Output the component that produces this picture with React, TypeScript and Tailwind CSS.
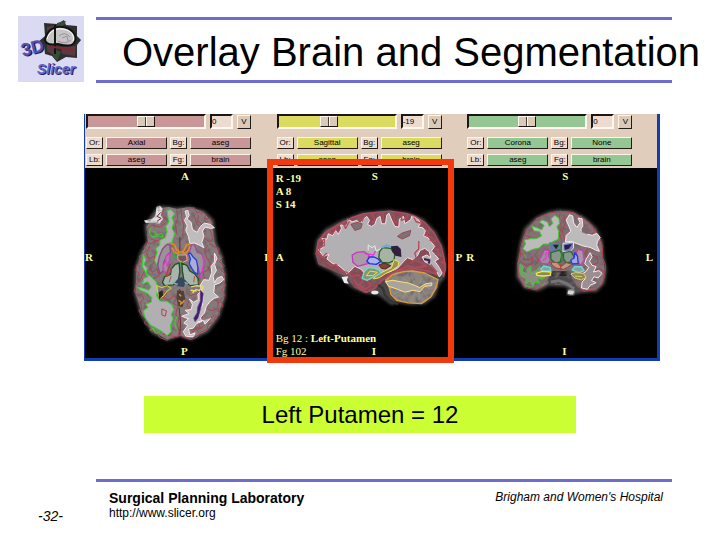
import React from 'react';

type Tone = 'red' | 'yellow' | 'green';

interface Plane {
  id: Tone;
  orientation: string;
  background: string;
  label: string;
  foreground: string;
  offset: string;
  slider: number;
}

const planes: Plane[] = [
  { id: 'red', orientation: 'Axial', background: 'aseg', label: 'aseg', foreground: 'brain', offset: '0', slider: 50 },
  { id: 'yellow', orientation: 'Sagittal', background: 'aseg', label: 'aseg', foreground: 'brain', offset: '-19', slider: 42 },
  { id: 'green', orientation: 'Corona', background: 'None', label: 'aseg', foreground: 'brain', offset: '0', slider: 50 },
];

const tones: Record<Tone, string> = {
  red: 'bg-[#c99797]',
  yellow: 'bg-[#dbdb62]',
  green: 'bg-[#95c795]',
};

const bevel = 'border border-t-[#fff4ea] border-l-[#fff4ea] border-r-[#221c18] border-b-[#221c18]';

const Tag = ({ children }: { children: React.ReactNode }) => (
  <button className={`h-3 w-[17px] shrink-0 bg-[#eedbd0] text-[8px] leading-[10px] text-center ${bevel}`}>{children}</button>
);

const Choice = ({ tone, children }: { tone: Tone; children: React.ReactNode }) => (
  <button className={`h-3 flex-1 text-[8px] leading-[10px] text-center ${tones[tone]} ${bevel}`}>{children}</button>
);

const Controls = ({ plane }: { plane: Plane }) => (
  <div className="w-[166px] space-y-1 pl-px">
    <div className="flex items-center gap-1 pb-1">
      <input
        type="range"
        aria-label={`${plane.orientation} slice`}
        defaultValue={plane.slider}
        className={`h-[15px] min-w-0 flex-1 appearance-none border-2 border-t-[#1d1613] border-l-[#1d1613] border-r-[#fff8f0] border-b-[#fff8f0] ${tones[plane.id]} [&::-webkit-slider-thumb]:h-[11px] [&::-webkit-slider-thumb]:w-[18px] [&::-webkit-slider-thumb]:appearance-none [&::-webkit-slider-thumb]:border [&::-webkit-slider-thumb]:border-t-[#fff8f0] [&::-webkit-slider-thumb]:border-l-[#fff8f0] [&::-webkit-slider-thumb]:border-r-[#1d1613] [&::-webkit-slider-thumb]:border-b-[#1d1613] [&::-webkit-slider-thumb]:bg-[linear-gradient(90deg,#dccab8_7px,#4a4038_7px,#4a4038_8px,#fff8f0_8px,#fff8f0_9px,#dccab8_9px)]`}
      />
      <input
        type="text"
        aria-label={`${plane.orientation} offset`}
        defaultValue={plane.offset}
        className="h-[15px] w-[23px] border-2 border-t-[#1d1613] border-l-[#1d1613] border-r-[#fff8f0] border-b-[#fff8f0] bg-[#eedbd0] text-[8px] leading-[10px]"
      />
      <button className={`h-[14px] w-[14px] bg-[#dccab8] text-[8px] leading-3 text-center ${bevel}`}>V</button>
    </div>
    <div className="flex gap-[3px]">
      <Tag>Or:</Tag>
      <Choice tone={plane.id}>{plane.orientation}</Choice>
      <Tag>Bg:</Tag>
      <Choice tone={plane.id}>{plane.background}</Choice>
    </div>
    <div className="flex gap-[3px] pt-px">
      <Tag>Lb:</Tag>
      <Choice tone={plane.id}>{plane.label}</Choice>
      <Tag>Fg:</Tag>
      <Choice tone={plane.id}>{plane.foreground}</Choice>
    </div>
  </div>
);

// shared scan grain and soft edge, used by all three slices
const ScanFilters = ({ id }: { id: string }) => (
  <defs>
    <filter id={`soft-${id}`} x="-10%" y="-10%" width="120%" height="120%">
      <feGaussianBlur stdDeviation="4" />
    </filter>
    <filter id={`grain-${id}`} x="0" y="0" width="100%" height="100%">
      <feTurbulence type="fractalNoise" baseFrequency="0.06" numOctaves="2" seed="8" result="n" />
      <feColorMatrix in="n" type="matrix" values="0 0 0 0 0.16  0 0 0 0 0.13  0 0 0 0 0.14  2.8 0 0 0 -1.3" result="d" />
      <feComposite in="d" in2="SourceGraphic" operator="in" result="m" />
      <feMerge>
        <feMergeNode in="SourceGraphic" />
        <feMergeNode in="m" />
      </feMerge>
    </filter>
  </defs>
);

const AxialSlice = () => (
  <svg viewBox="15 9 573 570" className="h-full w-full" fill="none" strokeLinejoin="round">
    <ScanFilters id="ax" />
    <path d="M235 122 262 124 290 128 330 124 375 138 402 165 410 230 428 270 440 330 438 400 418 460 385 502 335 526 300 516 262 528 215 505 182 452 162 385 164 310 182 258 200 230 194 180Z" fill="#555" filter="url(#soft-ax)" />
    <path d="M240 130 266 126 292 132 330 126 370 140 396 170 404 232 424 280 436 340 432 402 412 458 380 498 330 522 302 512 262 524 220 500 188 450 167 385 170 310 188 260 204 232 200 185Z" fill="#877a7c" filter="url(#grain-ax)" />
    {/* cortical folds */}
    <g stroke="#a94453" strokeWidth="3">
      <path d="M252 128 248 150 256 158 244 168 254 176 238 186 216 180 204 190 202 212 212 222 232 228 248 220 256 212M232 226 214 236 200 232 192 246 200 256 190 264 178 274 184 290 172 298 168 316 178 326 170 340 182 346 168 358 164 380 174 394 184 388 192 400 182 412 186 432 176 436 186 452 198 460 194 476 208 484 214 500 230 502 240 518 262 526 280 514 294 516 298 498 292 480 298 462 288 448 292 430" />
      <path d="M290 132 294 158 286 180 292 208M304 128 306 160 312 182 308 214M316 128 344 128 352 144 362 138 378 148 374 162 390 160 398 176 384 186 394 202 400 222 388 230 372 218 366 206 378 196 362 190 366 176 354 168 356 150M388 236 404 244 418 250 416 266 428 276 420 290 434 302 424 316 436 326 430 344 438 362 426 374 436 392 422 404 430 424 416 432 420 450 406 456 402 474 386 476 382 496 364 500 352 516 332 524 312 518 302 510" />
      <path d="M210 242 200 266 208 282 224 272 222 294 208 304 218 322 232 312 238 332 218 342 204 334 194 318 184 336 196 352M384 240 374 258 382 280 392 296 384 316 370 322 374 342 386 350 398 336 408 322M176 362 186 376M200 404 212 414 198 420 206 436 218 434M244 376 260 386 250 400 268 404 282 392 290 402 280 414 294 424M320 384 334 392 350 386 360 404 346 416 330 404 322 420 336 432M384 408 400 402 416 410 414 430 396 438 380 430 382 412M372 446 366 462 352 468 360 484 342 494 328 488" />
      <path d="M228 478 240 492 256 496 250 508 268 512 278 500M336 502 348 494 362 490 376 480 392 462 404 450M344 150 348 170 360 186M196 284 184 276M414 290 404 284 396 272" />
    </g>
    {/* white matter, right hemisphere */}
    <g fill="#b1afb1" stroke="#35d82a" strokeWidth="3">
      <path d="M262 136 274 134 284 146 276 158 282 172 276 188 284 206 276 232 262 236 252 244 244 262 236 282 230 298 224 286 232 262 228 250 240 240 240 226 256 218 262 200 258 184 268 170 264 154Z" />
      <path d="M212 188 208 204 218 216 236 212 250 216 246 206 230 208 220 198" fill="none" />
      <path d="M190 268 198 284 192 298 202 310 198 326 214 336 228 350 234 368 230 392 240 408 262 410 276 420 282 434 274 448 280 462 272 480 274 500 262 512 244 498 230 490 212 480 196 458 190 438 204 428 198 418 214 412 216 398 202 384 182 376 172 366 190 370 206 376 214 366 204 350 188 356 192 340 204 336 196 320 188 306Z" />
      <path d="M210 496 220 490 228 506 240 500M292 454 284 474 290 492" fill="none" />
    </g>
    <path d="m246 432 14 6-4 16-10-4Z" stroke="#a94453" strokeWidth="3" />
    {/* white matter, left hemisphere */}
    <g fill="#bebcbd" stroke="#ffe4ec" strokeWidth="3">
      <path d="M316 138 324 136 328 150 322 162 334 172 338 194 352 202 362 184 374 174 392 178 404 188 392 190 376 186 368 198 372 214 366 232 372 248 358 240 344 234 330 236 326 214 318 196 322 182 314 166 320 154Z" />
      <path d="M404 264 412 280 404 298 410 316 400 334 404 354 412 340 426 334 432 344 420 354 404 360 402 384 416 396 404 400 392 408 380 424 374 444 362 458 366 470 350 476 340 490 326 492 330 510 346 504 340 516 318 514 310 500 324 482 312 474 326 462 306 454 328 446 316 436 334 434 338 418 328 402 342 412 356 404 354 388 364 378 362 360 372 344 388 346 396 322 394 304 404 290Z" />
      <path d="M360 372 370 396 368 420 354 444M352 472 370 466 376 478 392 460" />
    </g>
    <g fill="#9a9199" strokeWidth="4">
      <path d="M262 238 270 240 272 262 262 270 252 292 250 318 240 326 234 302 238 276 248 252Z" stroke="#8d498f" />
      <path d="M336 238 344 240 352 262 366 266 374 290 370 318 360 328 352 300 340 278 328 264Z" stroke="#a44c9d" />
      <path d="M270 266 258 274 258 290 250 300 252 318 262 324 266 308 260 298 268 288Z" stroke="#f22ce4" />
      <path d="M326 266 332 264 340 276 350 286 354 306 354 328 344 322 336 310 328 296 332 282Z" fill="#aab0d4" stroke="#2d3be6" />
      <path d="M370 270 372 296 366 324 362 338" stroke="#f22ce4" fill="none" />
    </g>
    <path d="M272 234 284 240 290 254 300 258 294 266 284 262 276 248M332 236 320 240 314 254 306 262 316 266 326 256 330 244" stroke="#e78a25" strokeWidth="5" />
    <path d="M282 262 286 278 298 272 300 290 312 280M302 268 304 300" stroke="#2cb336" strokeWidth="4" />
    <path d="M294 270 320 270 322 286 308 292 294 284Z" stroke="#f3a090" strokeWidth="3" fill="#71585c" />
    <g stroke="#1d5422" strokeWidth="4" fill="#a7b5ae">
      <path d="M298 294 286 298 274 312 272 328 254 336 248 352 254 362 280 360 296 344 300 320Z" />
      <path d="M306 294 322 302 330 318 344 326 356 342 356 360 330 362 312 344 308 320Z" />
    </g>
    <path d="M272 296 264 316 258 334 268 328 276 310" stroke="#a44839" strokeWidth="4" />
    <path d="M296 340 306 336 318 350 312 366 294 364 284 354Z" fill="#36485f" />
    <path d="M278 352 294 358M314 352 324 356" stroke="#81aecd" strokeWidth="4" />
    <path d="M230 362 246 368 262 362 274 370 262 378 252 392 240 400 234 384Z" stroke="#d9d945" strokeWidth="3" />
    <path d="M334 366 352 362 370 366 366 378 348 374 338 384M332 376 350 378" stroke="#e6dc72" strokeWidth="4" />
    <path d="M236 382 248 376 250 390 238 404Z" fill="#26262c" />
    <path d="M362 376 370 386 368 408 362 432 354 460 346 470 342 460 352 444 354 426 362 408Z" fill="#3c2266" stroke="#583184" strokeWidth="2" />
    <path d="M292 376 312 378 316 400 308 428 294 422 290 398Z" fill="#4f423a" />
    <path d="M298 388 304 394M296 406 304 412 302 420M314 406 306 416" stroke="#e4982c" strokeWidth="4" />
    <path d="M274 334 268 352M344 334 342 352M352 340 356 354" stroke="#b45631" strokeWidth="3" />
    <path d="M230 126 240 122 248 130 242 150 250 162 238 176 218 172 198 174 192 166 216 162 226 154Z" fill="#dedede" filter="url(#grain-ax)" />
    <path d="M242 142 232 154 244 160 232 168M300 216 300 258M300 372 300 384M298 430 302 470 300 512" stroke="#6c2935" strokeWidth="3" />
  </svg>
);

const SagittalSlice = () => (
  <svg viewBox="33 39 573 570" className="h-full w-full" fill="none" strokeLinejoin="round">
    <ScanFilters id="sa" />
    <path d="M148 295 154 255 180 222 230 195 290 172 370 164 430 172 475 190 515 230 538 280 546 330 540 370 525 386 512 425 480 448 440 450 400 444 380 450 340 420 300 416 262 400 230 372 200 350 158 330Z" fill="#494949" filter="url(#soft-sa)" />
    <path d="M152 296 158 256 184 226 234 198 292 176 368 167 428 176 470 194 510 234 532 280 544 330 538 364 500 356 440 346 390 354 350 380 326 406 300 414 268 398 246 366 200 346 160 328Z" fill="#884c57" filter="url(#grain-sa)" />
    <path d="M360 372 390 352 440 346 480 354 520 374 518 398 500 426 476 444 436 444 394 436 376 412Z" fill="#8c8681" filter="url(#grain-sa)" />
    {/* white matter */}
    <path d="M160 284 174 278 178 262 170 250 186 252 190 236 204 242 212 226 220 238 230 220 226 208 242 214 250 204 248 192 262 200 276 196 286 206 296 192 306 184 314 196 308 208 320 214 330 208 336 190 346 184 350 206 362 206 366 180 372 174 382 198 390 214 402 216 404 192 416 184 420 206 438 194 442 180 458 190 468 204 460 216 474 218 482 228 476 242 490 248 500 262 510 274 500 288 512 300 522 312 510 318 524 338 532 354 524 366 512 344 496 328 480 320 472 306 486 300 498 308 494 290 480 280 466 286 458 302 444 314 428 308 416 320 398 340 376 350 340 362 300 356 288 342 270 334 256 348 246 356 238 346 222 332 204 326 186 312 192 298 176 304Z" fill="#b2b0b2" stroke="#ffd9e1" strokeWidth="3" />
    <path d="M258 208 276 202 292 206 288 220 270 226ZM398 244 412 234 438 226 434 242 412 252Z" fill="#7d7377" stroke="#9b4652" strokeWidth="3" />
    <g stroke="#b54a5b" strokeWidth="4">
      <path d="M154 298 160 262 176 238 200 222 232 204 260 188 298 176 334 172 376 168 420 174 452 184 482 204 508 234 528 270 538 308 542 344 536 366" />
      <path d="M166 260 178 252 178 272 166 276 160 294 172 308 186 294M196 228 202 238 214 220M236 208 242 220 254 198M284 188 292 198 300 180M322 178 330 194 322 204M354 174 356 198M386 176 388 198 398 204M410 178 410 196 424 190 430 178M448 188 454 200 474 206M480 220 492 232 484 242 504 248M494 254 506 262 516 254M508 284 522 282 518 298 534 304M528 320 538 326" />
      <path d="M184 320 200 332 214 328 226 346 246 352 260 364 282 360 296 376 282 390 302 402 318 392 304 374 324 372M450 316 468 322 484 334 462 336 444 340 430 332 412 342 396 348 370 362M462 258 462 282 450 294 454 308 438 326M268 374 280 396 304 412 328 402 354 374 392 350 440 340 492 348 520 362M498 328 516 350 508 358" />
    </g>
    {/* deep structures */}
    <path d="M262 300 276 292 298 290 312 300 310 314 322 322 300 328 278 334 264 322Z" fill="#aa9aa7" stroke="#c33bb8" strokeWidth="4" />
    <path d="M300 296 326 300 332 288M312 320 302 328" stroke="#ef31de" strokeWidth="4" />
    <path d="M310 286 310 270 322 278 330 272 334 288 350 280" stroke="#e3eef2" strokeWidth="3" />
    <path d="M306 318 314 306 328 306 340 312 348 320 334 328 314 326Z" fill="#abb5ed" stroke="#252bef" strokeWidth="4" />
    <path d="M344 290 354 278 378 280 390 296 388 316 372 324 352 322 342 308Z" fill="#a7b4a4" stroke="#295d2a" strokeWidth="4" />
    <path d="M378 274 398 272 408 282 410 306 392 302 382 290Z" fill="#2f203f" />
    <path d="M352 278 366 270 378 276" stroke="#6aaed2" strokeWidth="6" />
    <path d="M342 330 358 324 378 332 362 342 350 340Z" fill="#80433a" stroke="#52251f" strokeWidth="3" />
    <path d="M388 314 402 320 400 334 382 346 362 356 344 368 326 372 334 360 360 348 380 338Z" fill="#989451" stroke="#eee45b" strokeWidth="3" />
    <path d="M292 370 298 350 310 338 330 340 344 346 348 354 330 364 306 376Z" fill="#86956d" stroke="#6cd9d7" strokeWidth="4" />
    <path d="M304 362 316 348 338 352 324 362Z" stroke="#e5dd54" strokeWidth="3" />
    {/* cerebellum */}
    <path d="M362 378 382 360 416 350 444 348 480 354 520 374 512 402 498 426 470 446 430 444 396 436 378 418 374 396Z" stroke="#df9a3e" strokeWidth="4" />
    <path d="M378 400 404 390 430 392M386 418 420 402M410 432 440 402M440 440 452 408M462 436 464 408M484 424 472 402M500 404 480 394M408 366 432 382M440 360 448 384M474 364 464 386" stroke="#9f9993" strokeWidth="2" />
    <path d="M362 380 384 376 406 380 430 384 452 392 464 398 484 386 502 384 500 392 480 394 466 410 444 406 420 412 396 402 372 394Z" fill="#aaa399" stroke="#ffe17a" strokeWidth="3" />
    {/* bright skull base spots */}
    <path d="M230 366 250 364 246 376 252 386 238 384Z" fill="#ececec" />
    <ellipse cx="330" cy="413" rx="11" ry="6" fill="#e8e8e8" />
    <path d="M340 390 354 400 360 420 374 436 400 448" stroke="#343434" strokeWidth="7" />
    <path d="M478 312 494 316 492 326" stroke="#371f48" strokeWidth="6" />
  </svg>
);

const CoronalSlice = () => (
  <svg viewBox="51 24 573 570" className="h-full w-full" fill="none" strokeLinejoin="round">
    <ScanFilters id="co" />
    <path d="M330 148 372 152 410 172 444 204 462 244 466 290 474 330 468 370 444 396 404 398 372 404 350 380 300 378 268 394 226 386 202 352 204 300 212 250 226 204 262 170 298 154Z" fill="#505050" filter="url(#soft-co)" />
    <path d="M334 152 372 156 408 176 440 208 458 248 462 292 468 330 462 368 440 390 404 392 374 370 356 352 310 352 294 374 262 388 228 380 208 350 208 300 218 250 232 208 264 174 300 158Z" fill="#837174" filter="url(#grain-co)" />
    <path d="M308 334 364 334 370 356 382 374 374 386 346 376 304 374 296 360Z" fill="#4c4c4c" filter="url(#grain-co)" />
    <path d="M306 366 330 362 356 372 376 386" stroke="#757575" strokeWidth="9" />
    <g stroke="#aa4150" strokeWidth="3">
      <path d="M334 154 306 158 278 168 256 184 236 206 224 232 216 262 214 290 206 308 208 346 226 382 262 390 290 376M338 154 374 158 406 178 424 190 440 212 454 236 462 260 460 290 470 314 468 350 458 376 440 390 404 394 378 374" />
      <path d="M334 158 330 180 338 198 332 220 340 246M344 162 350 190 340 212 348 240M252 190 262 204 250 212M228 226 244 230 232 242M216 280 230 288 222 298 242 300 252 290 248 312 232 318 220 308M268 272 258 286 270 300 258 316M398 166 396 188 412 202 398 214M430 196 438 214 430 224 414 216 404 206M450 250 438 248 446 266 430 270M430 286 446 290 448 308 434 314 438 330 452 326 466 334 456 346M418 262 408 282 420 302 406 324 392 330 406 344M422 326 432 346 444 352M398 362 416 368 414 382 434 384M212 330 228 334 218 352 238 360" />
    </g>
    <g fill="#bdbabb" stroke="#40c934" strokeWidth="3">
      <path d="M318 166 330 174 332 190 324 200 330 214 328 238 314 244 300 252 284 252 270 264 252 268 234 276 222 266 230 252 226 240 244 236 262 236 278 228 272 214 254 212 250 198 266 204 278 210 286 196 272 186 280 180 296 186 302 200 312 190 306 176Z" />
      <path d="M214 312 224 320 220 334 236 342 234 328 246 318 246 338 262 332 272 320 284 328 276 342 290 350 278 358 264 352 272 370 258 366 252 380 244 362 230 372 232 356 218 350 212 334Z" fill="#8c8e86" />
      <path d="M290 368 276 378M228 376 244 382M224 282 232 294" />
    </g>
    <g fill="#bdbabb" stroke="#ffe6ee" strokeWidth="3">
      <path d="M362 164 372 168 374 188 384 202 394 188 388 174 400 176 402 196 396 210 408 220 430 226 444 220 454 232 446 244 444 256 452 274 440 270 424 262 404 258 382 250 366 244 350 246 352 226 366 214 360 198 352 180Z" />
      <path d="M424 278 430 290 422 304 430 316 442 320 434 336 450 332 460 340 448 354 436 350 428 362 442 368 424 376 416 388 398 384 400 366 410 356 398 344 412 334 420 322 408 312 412 298Z" fill="#9a8e91" />
    </g>
    <path d="M400 204 416 200 428 212 414 222 400 216Z" fill="#77676d" stroke="#8f6670" strokeWidth="2" />
    {/* ventricles */}
    <path d="M302 248 330 252 332 268 316 280 302 266Z" fill="#6475a6" stroke="#36ae3d" strokeWidth="3" />
    <path d="M312 254 330 254 322 268Z" fill="#231d35" />
    <path d="M342 250 374 246 374 264 362 276 342 274Z" fill="#7983ba" stroke="#dce8ff" strokeWidth="3" />
    <path d="M346 256 370 252 360 266 348 270Z" fill="#31194a" />
    {/* thalamus and putamen */}
    <path d="M306 278 332 270 340 284 334 306 320 310 306 298ZM344 278 366 274 376 290 370 306 352 308 344 296Z" fill="#87988a" stroke="#24702c" strokeWidth="4" />
    <path d="M338 248 338 304" stroke="#1c9130" strokeWidth="4" />
    <path d="M286 270 300 272 298 286 304 300 296 312 278 310 272 298 280 286Z" fill="#a28ba0" stroke="#bf3fb1" strokeWidth="3" />
    <path d="M300 276 290 280 292 294 282 302" stroke="#f431e4" strokeWidth="4" />
    <path d="M386 268 402 272 406 300 396 316 388 306 382 288Z" fill="#b093a6" stroke="#be47ad" strokeWidth="4" />
    <path d="M378 278 386 288 388 310 370 312 366 300 376 294Z" fill="#9ba9df" stroke="#2f38e2" strokeWidth="4" />
    <path d="M306 306 326 308 336 320 352 308 370 312 356 322 344 328 322 324 310 316Z" fill="#c89383" stroke="#8e4a3e" strokeWidth="3" />
    <path d="M336 312 336 330" stroke="#b23f31" strokeWidth="3" />
    <path d="M276 328 284 318 304 322 306 332 284 334ZM370 330 378 320 398 320 406 332 390 338Z" fill="#7fa7a6" stroke="#79d6dc" strokeWidth="4" />
    <path d="M262 340 280 334 306 336 304 346 282 348 264 346Z" fill="#8d8b49" stroke="#efea46" strokeWidth="4" />
    <path d="M366 342 380 338 404 340 412 352 398 360 378 354ZM378 348 400 350" fill="#8d8b49" stroke="#dbd16b" strokeWidth="3" />
    <path d="M360 390 376 392 374 404 356 404Z" fill="#eee" filter="url(#soft-co)" />
    <path d="M358 392 376 394 372 404 356 402Z" fill="#d6d6d6" />
    <path d="M312 334 356 334 362 348 310 348Z" fill="#282828" filter="url(#grain-co)" />
  </svg>
);

const Logo = () => (
  <svg viewBox="0 0 66 66" className="h-[66px] w-[66px] shrink-0 bg-[#dadaf2]" role="img" aria-label="3D Slicer">
    <path d="M26 7 39 8 46 4 48 9 59 10 59 20 63 24 59 29 59 42 48 41 39 46 34 40 27 38 26 29 20 26 27 20Z" fill="#2c302d" />
    <path d="M29 11 39 9 38 41 29 35ZM43 31 58 30 57 40 44 38Z" fill="#5b3941" />
    <path d="M39 7 48 5 46 9 39 13ZM38 34 43 36 39 45 35 40Z" fill="#384d38" />
    <path d="M27 24C29 14 36 10 44 11 54 12 59 19 57 25 55 31 48 30 40 28 34 29 28 29 27 24Z" fill="#c7c4c5" stroke="#121212" strokeWidth="2" />
    <path d="M29 23C31 15 38 12 45 13 53 14 57 20 55 25" fill="none" stroke="#fff" strokeWidth="1" />
    <path d="M41 20Q47 15 52 21M40 25Q47 29 53 24M44 22 49 20 50 25" fill="none" stroke="#999196" strokeWidth="1" />
    <path d="M37 9 37 38" stroke="#101510" strokeWidth="2" />
    <path d="M31 31Q43 31 57 35" fill="none" stroke="#7e2831" strokeWidth="2" />
    <g fontFamily='"Liberation Sans", Arial, sans-serif'>
      <g transform="rotate(-14 14 32)" fontSize="18" fontWeight="bold">
        <text x="4" y="39" fill="#1c174f">3D</text>
        <text x="3" y="38" fill="#5550b4">3D</text>
      </g>
      <g fontSize="14" fontStyle="italic" fontWeight="bold">
        <text x="20" y="59" fill="#252361">Slicer</text>
        <text x="19" y="58" fill="#6665cd">Slicer</text>
      </g>
    </g>
  </svg>
);

interface ViewerProps {
  top: string;
  bottom: string;
  left: string;
  right: string;
  children: React.ReactNode;
}

const Viewer = ({ top, bottom, left, right, children }: ViewerProps) => (
  <div className="relative h-[190px] overflow-hidden bg-black">
    {children}
    <span className="absolute top-0.5 left-24">{top}</span>
    <span className="absolute bottom-0 left-24">{bottom}</span>
    <span className="absolute top-[83px] left-0">{left}</span>
    <span className="absolute top-[83px] right-1">{right}</span>
  </div>
);

const App = () => {
  return (
    <div className="flex min-h-screen flex-col bg-white font-['Liberation_Sans',Arial,sans-serif] text-black">
      <header className="flex gap-3 pt-4 pl-[18px]">
        <Logo />
        <div className="mt-px h-[66px] min-w-0 flex-1">
          <div className="mr-12 h-[3px] bg-[#6d6dcf]" />
          <h1 className="h-[60px] pl-[26px] text-[40px] leading-[64px] whitespace-nowrap">Overlay Brain and Segmentation</h1>
          <div className="mr-12 h-[3px] bg-[#6d6dcf]" />
        </div>
      </header>

      <main className="mt-[31px] flex-1">
        <section className="relative mr-[60px] ml-[84px] border-r-[3px] border-b-[3px] border-l border-[#123db0]">
          <div className="grid h-[54px] grid-cols-3 bg-[#e1cdbb]">
            {planes.map((plane) => (
              <Controls key={plane.id} plane={plane} />
            ))}
          </div>
          <div className="grid grid-cols-3 bg-black font-['Liberation_Serif',serif] text-[11px] leading-[13px] font-bold text-[#ffffa0]">
            <Viewer top="A" bottom="P" left="R" right="L">
              <AxialSlice />
            </Viewer>
            <Viewer top="S" bottom="I" left="A" right="P">
              <SagittalSlice />
              <div className="absolute top-1 left-0">
                <p>R -19</p>
                <p>A 8</p>
                <p>S 14</p>
              </div>
              <div className="absolute bottom-0 left-0">
                <p>
                  <span className="font-normal">Bg 12 : </span>Left-Putamen
                </p>
                <p className="font-normal">Fg 102</p>
              </div>
            </Viewer>
            <Viewer top="S" bottom="I" left="R" right="L">
              <CoronalSlice />
            </Viewer>
          </div>
          {/* highlight around the sagittal view */}
          <div className="pointer-events-none absolute top-[45px] -bottom-[5px] left-[182px] w-[187px] border-6 border-[#f03a0d]" />
        </section>

        <p className="mx-auto mt-[35px] w-3/5 bg-[#ccff33] text-center text-2xl leading-[37px]">Left Putamen = 12</p>
      </main>

      <footer className="flex pb-[14px]">
        <p className="w-24 pt-[27px] pl-[38px] text-sm italic">-32-</p>
        <div className="mr-12 flex flex-1 justify-between border-t-[3px] border-[#6d6dcf] pt-2 pr-[9px] pl-[13px]">
          <div>
            <p className="text-sm leading-4 font-bold">Surgical Planning Laboratory</p>
            <a href="http://www.slicer.org" className="block text-xs leading-[15px]">http://www.slicer.org</a>
          </div>
          <p className="text-xs leading-[14px] italic">Brigham and Women's Hospital</p>
        </div>
      </footer>
    </div>
  );
};

export default App;
